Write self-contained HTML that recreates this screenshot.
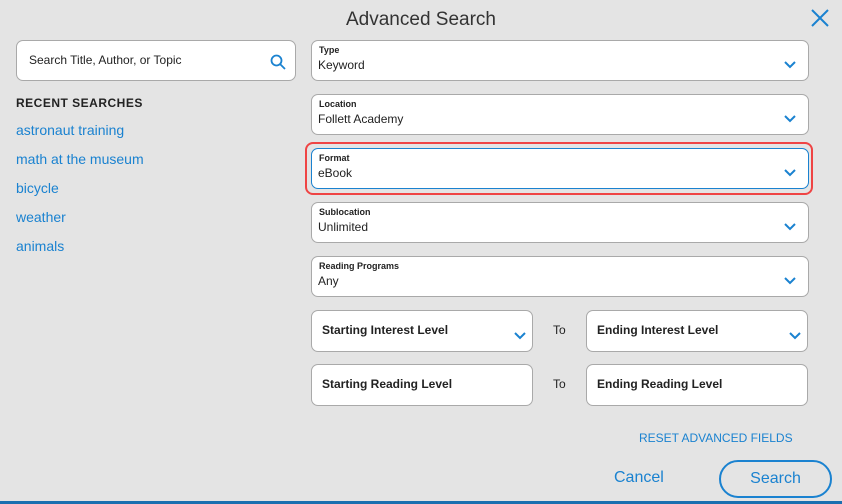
<!DOCTYPE html><html><head><style>
body{margin:0;width:842px;height:504px;background:#e4e4e4;font-family:"Liberation Sans",sans-serif;position:relative;overflow:hidden}
.a{position:absolute}
.f{position:absolute;background:#fff;border:1px solid #a9a9a9;border-radius:7px;box-sizing:border-box}
.lb{position:absolute;left:7px;top:4px;font-size:9px;font-weight:bold;color:#222}
.v{position:absolute;left:6px;top:17px;font-size:12px;color:#222}
.ch{position:absolute;right:12px;top:20px}
.hl{position:absolute;left:10px;top:12px;font-size:12px;font-weight:bold;color:#222}
.lk{position:absolute;left:16px;font-size:14px;color:#1a82d0}
</style></head><body>
<div class="a" style="left:0;width:842px;top:9px;text-align:center;font-size:19px;color:#333">Advanced Search</div>
<svg class="a" style="left:810px;top:8px" width="20" height="20"><path d="M2 2L18 18M18 2L2 18" stroke="#1a82d0" stroke-width="2"/></svg>
<div class="f" style="left:16px;top:40px;width:280px;height:41px"><div class="a" style="left:12px;top:12px;font-size:12px;color:#222">Search Title, Author, or Topic</div>
<svg class="a" style="left:253px;top:13px" width="16" height="16"><circle cx="6.5" cy="6.5" r="5" fill="none" stroke="#1a82d0" stroke-width="1.8"/><path d="M10 10L15 15" stroke="#1a82d0" stroke-width="1.8"/></svg></div>
<div class="a" style="left:16px;top:96px;font-size:12px;font-weight:bold;color:#222;letter-spacing:.5px">RECENT SEARCHES</div>
<div class="lk" style="top:122px">astronaut training</div>
<div class="lk" style="top:151px">math at the museum</div>
<div class="lk" style="top:180px">bicycle</div>
<div class="lk" style="top:209px">weather</div>
<div class="lk" style="top:238px">animals</div>

<div class="f" style="left:311px;top:40px;width:498px;height:41px"><div class="lb">Type</div><div class="v">Keyword</div><svg class="ch" width="12" height="8"><path d="M1 1L6 6L11 1" fill="none" stroke="#1a82d0" stroke-width="2"/></svg></div>
<div class="f" style="left:311px;top:94px;width:498px;height:41px"><div class="lb">Location</div><div class="v">Follett Academy</div><svg class="ch" width="12" height="8"><path d="M1 1L6 6L11 1" fill="none" stroke="#1a82d0" stroke-width="2"/></svg></div>
<div class="a" style="left:305px;top:142px;width:504px;height:49px;border:2px solid #ef4444;border-radius:8px"></div>
<div class="f" style="left:311px;top:148px;width:498px;height:41px;border-color:#1a82d0"><div class="lb">Format</div><div class="v">eBook</div><svg class="ch" width="12" height="8"><path d="M1 1L6 6L11 1" fill="none" stroke="#1a82d0" stroke-width="2"/></svg></div>
<div class="f" style="left:311px;top:202px;width:498px;height:41px"><div class="lb">Sublocation</div><div class="v">Unlimited</div><svg class="ch" width="12" height="8"><path d="M1 1L6 6L11 1" fill="none" stroke="#1a82d0" stroke-width="2"/></svg></div>
<div class="f" style="left:311px;top:256px;width:498px;height:41px"><div class="lb">Reading Programs</div><div class="v">Any</div><svg class="ch" width="12" height="8"><path d="M1 1L6 6L11 1" fill="none" stroke="#1a82d0" stroke-width="2"/></svg></div>

<div class="f" style="left:311px;top:310px;width:222px;height:42px"><div class="hl">Starting Interest Level</div><svg class="ch" style="top:21px;right:6px" width="12" height="8"><path d="M1 1L6 6L11 1" fill="none" stroke="#1a82d0" stroke-width="2"/></svg></div>
<div class="a" style="left:553px;top:323px;font-size:12px;color:#222">To</div>
<div class="f" style="left:586px;top:310px;width:222px;height:42px"><div class="hl">Ending Interest Level</div><svg class="ch" style="top:21px;right:6px" width="12" height="8"><path d="M1 1L6 6L11 1" fill="none" stroke="#1a82d0" stroke-width="2"/></svg></div>
<div class="f" style="left:311px;top:364px;width:222px;height:42px"><div class="hl">Starting Reading Level</div></div>
<div class="a" style="left:553px;top:377px;font-size:12px;color:#222">To</div>
<div class="f" style="left:586px;top:364px;width:222px;height:42px"><div class="hl">Ending Reading Level</div></div>

<div class="a" style="left:639px;top:431px;font-size:12px;color:#1a82d0">RESET ADVANCED FIELDS</div>
<div class="a" style="left:614px;top:469px;font-size:16px;color:#1a82d0">Cancel</div>
<div class="a" style="left:719px;top:460px;width:113px;height:38px;box-sizing:border-box;border:2px solid #1a82d0;border-radius:20px;text-align:center;line-height:34px;font-size:16px;color:#1a82d0">Search</div>
<div class="a" style="left:0;top:501px;width:842px;height:3px;background:#1a6fb0"></div>
</body></html>
